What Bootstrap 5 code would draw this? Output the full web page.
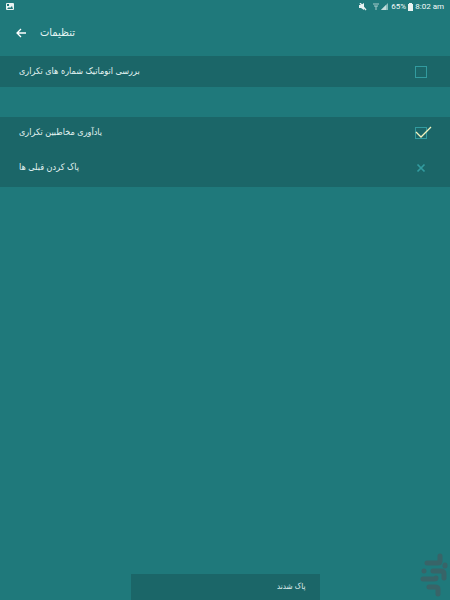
<!DOCTYPE html>
<html lang="fa">
<head>
<meta charset="utf-8">
<meta name="viewport" content="width=device-width, initial-scale=1">
<title>تنظیمات</title>
<link rel="stylesheet" href="https://cdn.jsdelivr.net/npm/bootstrap@5.3.0/dist/css/bootstrap.min.css">
<style>
  body { background: #1f797b; color: #e4f4f3; font-family: "DejaVu Sans Condensed", "DejaVu Sans", sans-serif; font-size: 9px; line-height: 16px; }
  svg { display: block; }
  .status-bar { height: 14px; padding: 0 6px; font-family: Roboto, sans-serif; font-size: 8px; line-height: 14px; color: #f4fbfa; }
  .status-icons { gap: 2px; }
  .app-header { height: 42px; padding: 0 16px 4px; gap: 14px; }
  .app-header h1 { font-size: 11px; line-height: 18px; font-weight: 400; }
  .back-button { width: 10px; height: 18px; }
  .panel { background: #1b6668; }
  .panel + .panel { margin-top: 30px; }
  .setting { padding: 0 23px 0 19px; height: 31px; }
  .setting-name { padding-bottom: 2px; }
  .panel-tall { padding-bottom: 4px; }
  .panel-tall .setting + .setting { margin-top: 4px; }
  .tick { width: 12px; height: 12px; }
  .tick input { appearance: none; width: 12px; height: 12px; border: 1px solid #329b9f; background: transparent; }
  .tick svg { left: 0; top: 0; overflow: visible; pointer-events: none; }
  .tick input:not(:checked) + svg { display: none; }
  .clear-button { width: 12px; height: 16px; }
  .notice { width: 42%; height: 26px; padding: 0 14px; background: #1b6668; font-size: 8px; line-height: 25px; left: 29%; bottom: 0; }
  .watermark { right: 2px; bottom: 3px; }
</style>
</head>
<body class="min-vh-100 position-relative overflow-hidden">
<div class="status-bar d-flex align-items-center justify-content-between">
  <svg width="8" height="8" viewBox="0 0 8 8"><rect width="8" height="7" rx="1" fill="#e8f3f2"/><path d="M1 6l2-2 1 1 2-2 1 3zM1 1h2v2H1z" fill="#1f797b"/></svg>
  <div class="status-icons d-flex align-items-center">
    <svg width="8" height="8" viewBox="0 0 8 8"><path d="M0 2h2l3-2v7L2 5H0z" fill="#e8f3f2"/><path d="M1 0l6 7" stroke="#e8f3f2" stroke-width="1.3"/></svg>
    <svg class="ms-1" width="6" height="8" viewBox="0 0 6 8"><path d="M0 1h6M1 3h4M3 3v4" stroke="#a8cdcc" fill="none"/></svg>
    <svg width="8" height="8" viewBox="0 0 8 8"><path d="M0 7L7 0v7z" fill="#8dbdbc"/><path d="M0 7l5-5v5z" fill="#c4dddc"/></svg>
    <span>65%</span>
    <svg width="5" height="8" viewBox="0 0 5 8"><path d="M1 0h3v1h1v7H0V1h1z" fill="#e8f3f2"/></svg>
    <span>8:02 am</span>
  </div>
</div>
<header class="app-header d-flex align-items-center">
  <button class="back-button btn p-0 border-0 d-flex align-items-center" type="button" aria-label="بازگشت">
    <svg width="10" height="10" viewBox="0 0 10 10"><path d="M10 5H1M5 1L1 5l4 4" fill="none" stroke="#fff" stroke-width="1.3"/></svg>
  </button>
  <h1 class="m-0" dir="rtl">تنظیمات</h1>
</header>
<main>
  <section class="panel">
    <div class="setting d-flex align-items-center justify-content-between">
      <label class="setting-name" for="auto-check" dir="rtl">بررسی اتوماتیک شماره های تکراری</label>
      <span class="tick position-relative d-flex"><input class="m-0" type="checkbox" id="auto-check"><svg class="position-absolute" width="16" height="12" viewBox="0 0 16 12"><path d="M1 5l5 5L16 0" fill="none" stroke="#f4f4be" stroke-width="1.3"/></svg></span>
    </div>
  </section>
  <section class="panel panel-tall">
    <div class="setting d-flex align-items-center justify-content-between">
      <label class="setting-name" for="remind" dir="rtl">یادآوری مخاطبین تکراری</label>
      <span class="tick position-relative d-flex"><input class="m-0" type="checkbox" id="remind" checked><svg class="position-absolute" width="16" height="12" viewBox="0 0 16 12"><path d="M1 5l5 5L16 0" fill="none" stroke="#f4f4be" stroke-width="1.3"/></svg></span>
    </div>
    <div class="setting d-flex align-items-center justify-content-between">
      <span class="setting-name" id="clear-label" dir="rtl">پاک کردن قبلی ها</span>
      <button class="clear-button btn p-0 border-0 d-flex align-items-center justify-content-center" type="button" aria-labelledby="clear-label"><svg width="10" height="10" viewBox="0 0 10 10"><path d="M1.500 1.500l7 7M8.500 1.500l-7 7" stroke="#329b9f" stroke-width="1.700"/></svg></button>
    </div>
  </section>
</main>
<div class="notice position-absolute" role="status" dir="rtl">پاک شدند</div>
<svg class="watermark position-absolute" width="28" height="44" viewBox="0 0 28 44" aria-hidden="true">
  <g fill="none" stroke="#386468" stroke-width="5" stroke-linecap="round" stroke-linejoin="round">
    <path d="M20 3v5q0 2-2 2H7M25 12v1M4 18h0M13 18h8q3 0 3 3v4M3 26h11q2 0 2-1M9 34h6q3 0 3 2v5"/>
  </g>
</svg>
<script src="https://cdn.jsdelivr.net/npm/bootstrap@5.3.0/dist/js/bootstrap.bundle.min.js"></script>
</body>
</html>
